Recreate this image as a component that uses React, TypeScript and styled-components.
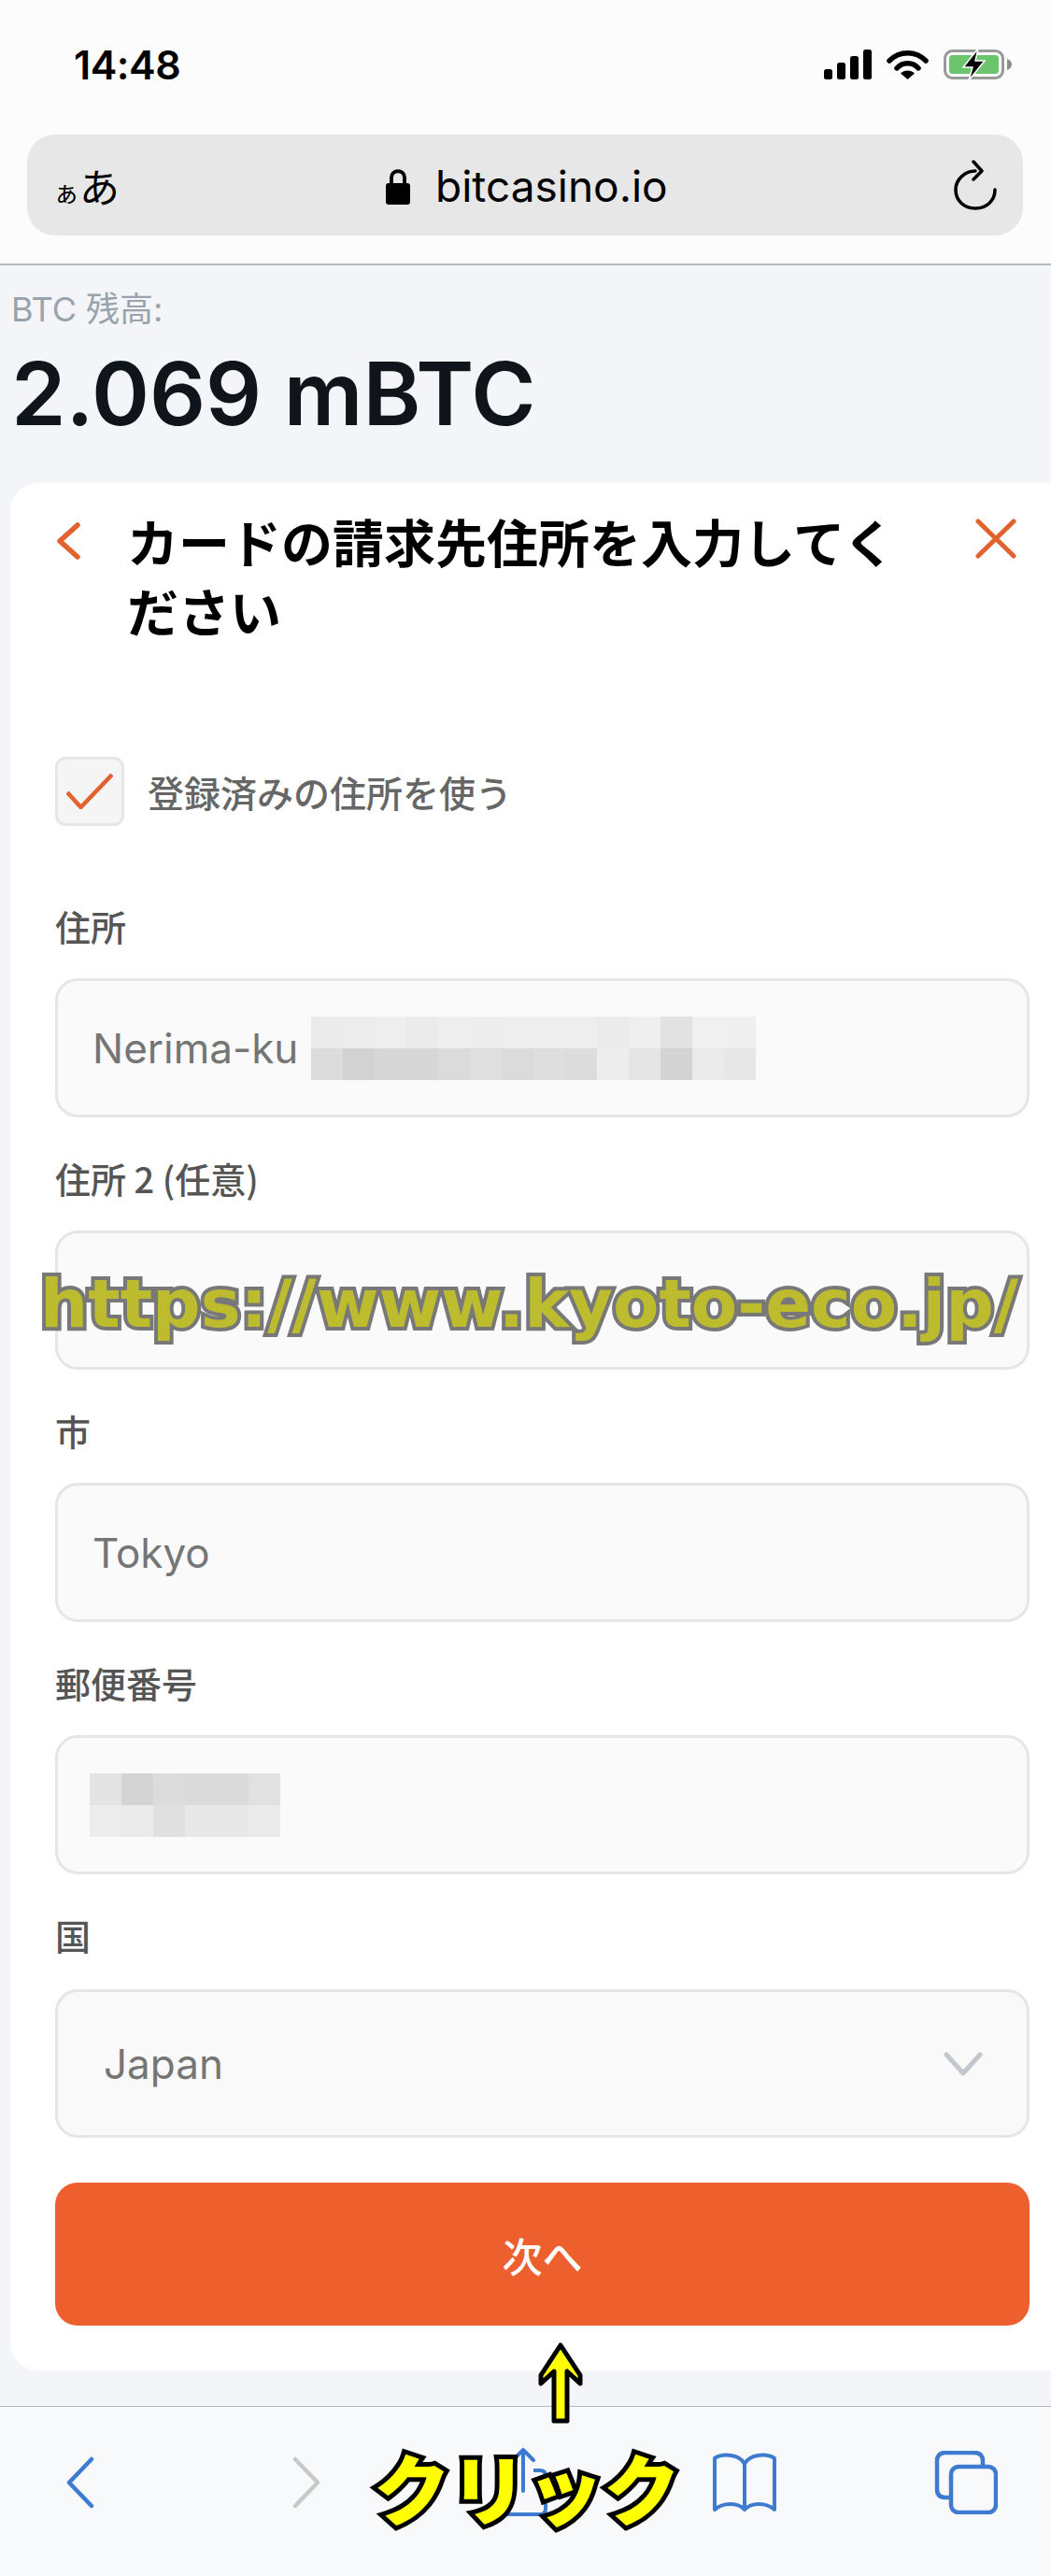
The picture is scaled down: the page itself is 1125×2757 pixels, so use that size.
import { FC, ReactNode } from "react";
import styled, { createGlobalStyle } from "styled-components";

// モザイクの色
const ADDRESS_MOSAIC = [
  "#ebebeb", "#ececec", "#eeeeee", "#ebebeb", "#eeeeee", "#ededed", "#eeeeee",
  "#eeeeee", "#eeeeee", "#ebebeb", "#efefef", "#e2e2e2", "#f0f0f0", "#efefef",
  "#dcdcdc", "#d2d2d2", "#d7d7d7", "#d7d7d7", "#dbdbdb", "#dfdfdf", "#dbdbdb",
  "#dedede", "#dcdcdc", "#ededed", "#e5e5e5", "#d3d3d3", "#ebebeb", "#e7e7e7",
];

const POSTAL_MOSAIC = [
  "#e4e4e4", "#d4d4d4", "#dcdcdc", "#dadada", "#dadada", "#e1e1e1",
  "#ececec", "#ebebeb", "#e0e0e0", "#e8e8e8", "#e8e8e8", "#ebebeb",
];

const Mosaic: FC<{ shades: string[]; columns: number; $indent?: number }> = ({ shades, columns, $indent }) => (
  <MosaicGrid $columns={columns} $indent={$indent}>
    {shades.map((shade, index) => (
      <MosaicCell key={index} $shade={shade} />
    ))}
  </MosaicGrid>
);

const Field: FC<{ label: string; children?: ReactNode }> = ({ label, children }) => (
  <FieldWrapper>
    <FieldLabel>{label}</FieldLabel>
    <InputBox>{children}</InputBox>
  </FieldWrapper>
);

export default function App() {
  return (
    <Page>
      <GlobalStyle />

      {/* Safariの上部 */}
      <BrowserHeader>
        <StatusBar>
          <Clock>14:48</Clock>
          <StatusIcons>
            <svg width="51" height="32" viewBox="0 0 51 32">
              <rect x="0" y="21" width="9" height="11" rx="2.5" fill="#000" />
              <rect x="14" y="14" width="9" height="18" rx="2.5" fill="#000" />
              <rect x="28" y="7" width="9" height="25" rx="2.5" fill="#000" />
              <rect x="42" y="0" width="9" height="32" rx="2.5" fill="#000" />
            </svg>
            <svg width="45" height="32" viewBox="0 0 45 32">
              <path d="M3 12 C14 1 31 1 42 12" fill="none" stroke="#000" strokeWidth="5.5" strokeLinecap="round" />
              <path d="M11 20 C17 13 28 13 34 20" fill="none" stroke="#000" strokeWidth="5.5" strokeLinecap="round" />
              <path d="M15 25.5 C19 21.5 26 21.5 30 25.5 L22.5 32 Z" fill="#000" />
            </svg>
            <svg width="73" height="34" viewBox="0 0 73 34">
              <rect x="1.5" y="2.5" width="62" height="29" rx="8" fill="none" stroke="#999" strokeWidth="3" />
              <rect x="6" y="7" width="53" height="20" rx="3.5" fill="#6cc56c" />
              <path d="M68 11 C71 12 73 14 73 17 C73 20 71 22 68 23 Z" fill="#8c8c8c" />
              <path d="M37 0 L21 20 H31 L27 34 L44 13 H34 Z" fill="#000" stroke="#fff" strokeWidth="1.5" />
            </svg>
          </StatusIcons>
        </StatusBar>
        <AddressBar>
          <TextSize>
            <small>ぁ</small>あ
          </TextSize>
          <Domain>
            <svg width="26" height="39" viewBox="0 0 26 39">
              <path d="M6 18 V10 C6 1 20 1 20 10 V18" fill="none" stroke="#000" strokeWidth="4" />
              <rect x="0" y="16" width="26" height="23" rx="3" fill="#000" />
            </svg>
            <span>bitcasino.io</span>
          </Domain>
          <svg width="46" height="54" viewBox="0 0 46 54">
            <path d="M23 12 C12 12 2 21 2 32 C2 44 11 52 23 52 C35 52 44 44 44 32" fill="none" stroke="#000" strokeWidth="3.5" strokeLinecap="round" />
            <path d="M21 2 L30 12 L21 21" fill="none" stroke="#000" strokeWidth="3.5" strokeLinecap="round" strokeLinejoin="round" />
          </svg>
        </AddressBar>
      </BrowserHeader>

      <Main>
        <BalanceLabel>BTC 残高:</BalanceLabel>
        <BalanceAmount>2.069 mBTC</BalanceAmount>

        <Card>
          <CardHeader>
            <svg width="28" height="40" viewBox="0 0 28 40">
              <polyline points="24,3 5,20 24,37" fill="none" stroke="#e2622f" strokeWidth="5.5" strokeLinecap="round" strokeLinejoin="round" />
            </svg>
            <CardTitle>カードの請求先住所を入力してください</CardTitle>
            <svg width="44" height="43" viewBox="0 0 44 43">
              <path d="M3 3 L41 40 M41 3 L3 40" fill="none" stroke="#e2622f" strokeWidth="5" strokeLinecap="round" />
            </svg>
          </CardHeader>

          <CheckRow>
            <CheckBox>
              <svg width="50" height="38" viewBox="0 0 50 38">
                <polyline points="1,20 15.500,36 49,1" fill="none" stroke="#e2622f" strokeWidth="4.500" strokeLinejoin="round" />
              </svg>
            </CheckBox>
            <CheckLabel>登録済みの住所を使う</CheckLabel>
          </CheckRow>

          <Fields>
            <Field label="住所">
              <InputText>Nerima-ku</InputText>
              <Mosaic shades={ADDRESS_MOSAIC} columns={14} $indent={14} />
            </Field>
            <Field label="住所 2 (任意)" />
            <Field label="市">
              <InputText>Tokyo</InputText>
            </Field>
            <Field label="郵便番号">
              <Mosaic shades={POSTAL_MOSAIC} columns={6} $indent={-3} />
            </Field>
            <FieldWrapper>
              <FieldLabel>国</FieldLabel>
              <SelectBox>
                <InputText>Japan</InputText>
                <svg width="42" height="26" viewBox="0 0 42 26">
                  <polyline points="3,3 21,23 39,3" fill="none" stroke="#c3c8ce" strokeWidth="5" strokeLinecap="round" strokeLinejoin="round" />
                </svg>
              </SelectBox>
            </FieldWrapper>
          </Fields>

          <NextButton>次へ</NextButton>
        </Card>
      </Main>

      {/* Safariの下部 */}
      <BottomBar>
        <ToolSlot>
          <svg width="30" height="56" viewBox="0 0 30 56">
            <polyline points="27,3 3,28 27,53" fill="none" stroke="#3d7bd0" strokeWidth="4.500" strokeLinecap="round" strokeLinejoin="round" />
          </svg>
        </ToolSlot>
        <ToolSlot>
          <svg width="44" height="56" viewBox="0 0 44 56">
            <polyline points="15,3 39,28 15,53" fill="none" stroke="#c9c9c9" strokeWidth="4.500" strokeLinecap="round" strokeLinejoin="round" />
          </svg>
        </ToolSlot>
        <ToolSlot>
          <svg width="60" height="74" viewBox="0 0 60 74">
            <path d="M30 46 V3 M19 13 L30 2 L41 13" fill="none" stroke="#3d7bd0" strokeWidth="4" strokeLinecap="round" strokeLinejoin="round" />
            <path d="M19 24 H12 C8 24 6 26 6 30 V65 C6 69 8 71 12 71 H48 C52 71 54 69 54 65 V30 C54 26 52 24 48 24 H41" fill="none" stroke="#3d7bd0" strokeWidth="4" />
          </svg>
        </ToolSlot>
        <ToolSlot>
          <svg width="70" height="64" viewBox="0 0 70 64">
            <path d="M35 12 C30 2 12 0 3 6 V61 C12 53 28 53 35 61 C42 53 58 53 67 61 V6 C58 0 40 2 35 12 V61" fill="none" stroke="#3d7bd0" strokeWidth="4" strokeLinejoin="round" />
          </svg>
        </ToolSlot>
        <ToolSlot>
          <svg width="68" height="68" viewBox="0 0 68 68">
            <rect x="18" y="17" width="48" height="49" rx="8" fill="none" stroke="#3d7bd0" strokeWidth="4.500" />
            <path d="M18 50 H12 C6 50 3 47 3 41 V11 C3 5 6 2 12 2 H43 C49 2 52 5 52 11 V17" fill="none" stroke="#3d7bd0" strokeWidth="4.500" />
          </svg>
        </ToolSlot>
      </BottomBar>

      {/* 画像に重ねた注釈 */}
      <Watermark>https://www.kyoto-eco.jp/</Watermark>
      <UpArrow width="52" height="90" viewBox="0 0 52 90">
        <path d="M26 4 L47 36 V45 L33 32 V85 H19 V32 L5 45 V36 Z" fill="#ffff00" stroke="#000" strokeWidth="5" strokeLinejoin="round" />
      </UpArrow>
      <ClickNote>クリック</ClickNote>
    </Page>
  );
}

const GlobalStyle = createGlobalStyle`
  html, body {
    margin: 0;
    padding: 0;
    background: #f3f5f8;
  }
  * {
    box-sizing: border-box;
  }
`;

const Page = styled.div`
  position: relative;
  display: flex;
  flex-direction: column;
  width: 1125px;
  height: 2757px;
  overflow: hidden;
  font-family: Inter, "Noto Sans CJK JP", sans-serif;
`;

const BrowserHeader = styled.header`
  flex: none;
  height: 284px;
  padding-top: 53px;
  background: #fcfcfc;
  border-bottom: 2px solid #b8b8b8;
`;

const StatusBar = styled.div`
  display: flex;
  justify-content: space-between;
  align-items: center;
  height: 32px;
  padding: 0 42px 0 79px;
`;

const Clock = styled.span`
  font-size: 43px;
  font-weight: 600;
  line-height: 32px;
  color: #000;
  letter-spacing: -0.5px;
`;

const StatusIcons = styled.div`
  display: flex;
  align-items: center;
  gap: 16px;
`;

const AddressBar = styled.div`
  position: relative;
  display: flex;
  justify-content: space-between;
  align-items: center;
  width: 1066px;
  height: 108px;
  margin: 59px 0 0 29px;
  padding: 0 28px;
  background: #e7e7e7;
  border-radius: 30px;
`;

const TextSize = styled.span`
  font-family: "Noto Sans CJK JP", sans-serif;
  font-size: 43px;
  line-height: 1;
  color: #000;
  small {
    font-size: 28px;
  }
`;

const Domain = styled.div`
  position: absolute;
  left: 384px;
  top: 30px;
  display: flex;
  align-items: center;
  gap: 27px;
  span {
    font-size: 46px;
    line-height: 50px;
    color: #000;
  }
`;

const Main = styled.main`
  flex: 1;
  display: flex;
  flex-direction: column;
  padding-top: 27px;
  background: #f3f5f8;
`;

const BalanceLabel = styled.div`
  padding-left: 12px;
  font-size: 36px;
  line-height: 40px;
  color: #99a3ad;
`;

const BalanceAmount = styled.div`
  margin-top: 20px;
  padding-left: 12px;
  font-size: 94px;
  font-weight: 600;
  line-height: 100px;
  color: #10151c;
`;

const Card = styled.section`
  display: flex;
  flex-direction: column;
  height: 2020px;
  margin: 46px 0 0 11px;
  padding: 24px 23px 48px 48px;
  background: #fff;
  border-radius: 30px 0 0 30px;
`;

const CardHeader = styled.div`
  display: flex;
  align-items: flex-start;
  > svg:first-child {
    flex: none;
    margin-top: 18px;
  }
  > svg:last-child {
    flex: none;
    margin: 14px 14px 0 0;
  }
`;

const CardTitle = styled.h1`
  flex: 1;
  margin: 0 60px 0 49px;
  font-family: "Noto Sans CJK JP", sans-serif;
  font-size: 55px;
  font-weight: 700;
  line-height: 74px;
  color: #000;
`;

const CheckRow = styled.label`
  display: flex;
  align-items: center;
  gap: 25px;
  margin-top: 121px;
`;

const CheckBox = styled.span`
  display: flex;
  align-items: center;
  justify-content: center;
  width: 74px;
  height: 74px;
  background: #f5f5f5;
  border: 3px solid #e6e6e6;
  border-radius: 11px;
`;

const CheckLabel = styled.span`
  font-family: "Noto Sans CJK JP", sans-serif;
  font-size: 39px;
  font-weight: 500;
  color: #666;
`;

const Fields = styled.div`
  display: flex;
  flex-direction: column;
  gap: 40px;
  margin-top: 82px;
`;

const FieldWrapper = styled.div`
  display: flex;
  flex-direction: column;
  gap: 31px;
`;

const FieldLabel = styled.div`
  height: 50px;
  font-family: "Noto Sans CJK JP", sans-serif;
  font-size: 38px;
  font-weight: 500;
  line-height: 50px;
  color: #555;
`;

const InputBox = styled.div`
  display: flex;
  align-items: center;
  height: 149px;
  padding: 0 37px;
  background: #fafafa;
  border: 3px solid #e6e6e6;
  border-radius: 24px;
`;

const SelectBox = styled(InputBox)`
  justify-content: space-between;
  height: 159px;
  margin-top: 2px;
  padding: 0 47px 0 49px;
  background: #f9f9fa;
`;

const InputText = styled.span`
  font-size: 44px;
  line-height: 50px;
  color: #757575;
`;

const MosaicGrid = styled.div<{ $columns: number; $indent?: number }>`
  display: grid;
  grid-template-columns: repeat(${(p) => p.$columns}, 34px);
  grid-auto-rows: 34px;
  margin-left: ${(p) => p.$indent ?? 0}px;
`;

const MosaicCell = styled.div<{ $shade: string }>`
  background: ${(p) => p.$shade};
`;

const NextButton = styled.button`
  height: 153px;
  margin-top: 48px;
  padding: 0;
  border: none;
  border-radius: 24px;
  background: #ee5f2e;
  font-family: "Noto Sans CJK JP", sans-serif;
  font-size: 43px;
  font-weight: 500;
  color: #fff;
`;

const BottomBar = styled.footer`
  flex: none;
  display: grid;
  grid-template-columns: repeat(5, 172px);
  grid-auto-rows: 82px;
  column-gap: 65px;
  height: 182px;
  padding-top: 40px;
  background: #f8f9fb;
  border-top: 1px solid #b8b8b8;
`;

const ToolSlot = styled.div`
  display: flex;
  align-items: center;
  justify-content: center;
`;

const Watermark = styled.div`
  position: absolute;
  left: 43px;
  top: 1350px;
  font-family: "DejaVu Sans", sans-serif;
  font-size: 72px;
  font-weight: 700;
  line-height: 90px;
  white-space: nowrap;
  color: #bcbc2e;
  -webkit-text-stroke: 8px #787878;
  paint-order: stroke fill;
`;

const UpArrow = styled.svg`
  position: absolute;
  left: 574px;
  top: 2506px;
`;

const ClickNote = styled.div`
  position: absolute;
  left: 400px;
  top: 2606px;
  font-family: "Noto Sans CJK JP", sans-serif;
  font-size: 82px;
  font-weight: 900;
  line-height: 110px;
  white-space: nowrap;
  color: #ffff00;
  -webkit-text-stroke: 10px #000;
  paint-order: stroke fill;
`;
